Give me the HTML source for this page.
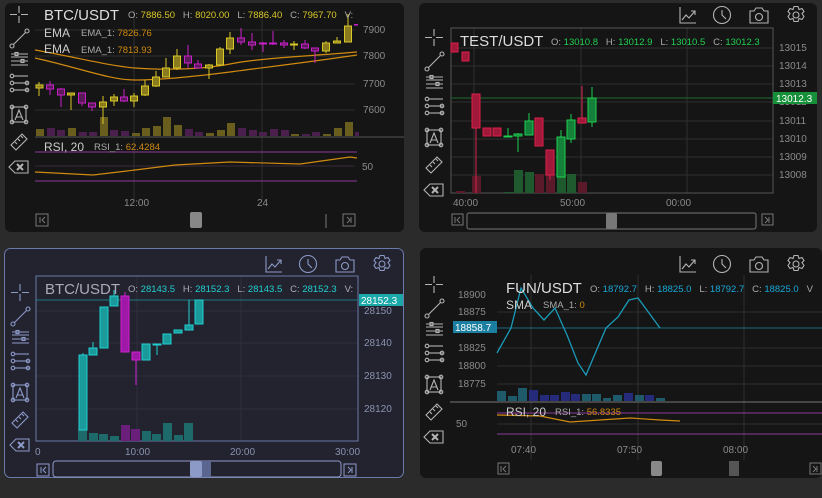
<!DOCTYPE html>
<html><head><meta charset="utf-8"><style>
html,body{margin:0;padding:0;background:#2b2b2b;width:822px;height:498px;overflow:hidden}
svg{display:block;font-family:"Liberation Sans",sans-serif}
text{white-space:pre}
.ic{fill:none;stroke:#b4b4b4;stroke-width:1.1}
.icb{fill:none;stroke:#8c9ac8;stroke-width:1.1}
.g{stroke:#2e2e2e;stroke-width:1}
.lab{fill:#8a8a8a;font-size:10px}
.yc rect{fill:#8a7c1e;stroke:#d8c828}
.yc line,.yw{stroke:#d8c828}
.mc rect{fill:#5a1a5a;stroke:#c820c8}
.mw{stroke:#c820c8}
</style></head><body>
<svg width="822" height="498" viewBox="0 0 822 498" xmlns="http://www.w3.org/2000/svg">
<defs>
<g id="tools">
 <path d="M19 6v7M19 16v7M10 14.5h7M21 14.5h7" />
 <circle cx="12" cy="46" r="2"/><circle cx="27" cy="31" r="2"/><path d="M13.5 44.5l12-12"/>
 <path d="M11 54h17M11 57h17M11 61h17M11 65h17"/><rect x="15" y="52.5" width="3" height="3"/><rect x="21" y="59.5" width="3" height="3"/>
 <circle cx="12" cy="76" r="1.8"/><path d="M14 76h14"/><circle cx="12" cy="83" r="1.8"/><path d="M14 83h14"/><circle cx="12" cy="90" r="1.8"/><path d="M14 90h14"/><circle cx="27" cy="83" r="1.8"/><circle cx="27" cy="90" r="1.8"/>
 <rect x="12" y="107" width="14" height="15"/><circle cx="12" cy="107" r="1.8"/><circle cx="26" cy="107" r="1.8"/><circle cx="12" cy="122" r="1.8"/><circle cx="26" cy="122" r="1.8"/>
 <path d="M15 120l4-10l4 10M16.5 117h5" />
 <path d="M11 145l11-11l5 5l-11 11z"/><path d="M15 142l2 2M18 139l2 2M21 136l2 2"/>
 <path d="M9 167l6-6h13v12h-13z"/><path d="M17 164l6 6M23 164l-6 6" stroke-width="2"/>
</g>
<g id="top">
 <path d="M0 0v16h16M2 13l4-5l3 3l6-7M11 4h4v4"/>
 <circle cx="42" cy="8" r="8.5"/><path d="M42 3v5l4 4"/>
 <path d="M70 4h4l2-3h6l2 3h4v12h-18z"/><circle cx="79" cy="10" r="3.5"/>
 <circle cx="116" cy="8" r="3"/><path d="M114 -1h4l1 3l3 -1l2 3l-2 2l2 3l-2 3l-3-1l-1 3h-4l-1-3l-3 1l-2-3l2-3l-2-2l2-3l3 1z" transform="translate(0,0.5)"/>
</g>
</defs>

<!-- ============ TL panel ============ -->
<rect x="5" y="3" width="399" height="229" rx="6" fill="#151515"/>
<use href="#tools" class="ic"/>
<g class="g">
<path d="M35 30h320M35 56h320M35 84h320M35 110h320M134 10v190M262 10v190"/>
<path d="M35 166h320" stroke="#3a2a3a"/>
</g>
<path d="M35 137h369" stroke="#555" stroke-width="1"/>
<path d="M35 152h322M35 181h322" stroke="#8a3a9a" stroke-width="1"/>
<g fill="#6a5e1e">
<rect x="36" y="129" width="8" height="7"/><rect x="68" y="128" width="8" height="8"/><rect x="100" y="117" width="8" height="19"/><rect x="132" y="133" width="8" height="3"/><rect x="142" y="128" width="8" height="8"/><rect x="153" y="126" width="8" height="10"/><rect x="163" y="117" width="8" height="19"/><rect x="174" y="125" width="8" height="11"/><rect x="206" y="133" width="8" height="3"/><rect x="217" y="130" width="8" height="6"/><rect x="227" y="123" width="8" height="13"/><rect x="291" y="134" width="8" height="2"/><rect x="323" y="134" width="8" height="2"/><rect x="334" y="128" width="8" height="8"/><rect x="345" y="122" width="8" height="14"/>
</g>
<g fill="#4a1f4e">
<rect x="47" y="128" width="8" height="8"/><rect x="57" y="130" width="8" height="6"/><rect x="79" y="132" width="8" height="4"/><rect x="89" y="132" width="8" height="4"/><rect x="110" y="130" width="8" height="6"/><rect x="121" y="131" width="8" height="5"/><rect x="185" y="129" width="8" height="7"/><rect x="195" y="132" width="8" height="4"/><rect x="238" y="128" width="8" height="8"/><rect x="249" y="130" width="8" height="6"/><rect x="259" y="132" width="8" height="4"/><rect x="270" y="129" width="8" height="7"/><rect x="281" y="130" width="8" height="6"/><rect x="302" y="134" width="8" height="2"/><rect x="312" y="132" width="8" height="4"/><rect x="355" y="132" width="4" height="4"/>
</g>
<path d="M35 50C80 58 110 66 135 68S200 70 230 64S310 56 357 52" fill="none" stroke="#d08a10" stroke-width="1.2"/>
<path d="M35 58C80 68 110 80 135 80S200 76 230 72S310 62 357 55" fill="none" stroke="#d08a10" stroke-width="1.2"/>
<g stroke-width="1">
<g class="yc"><line x1="39" y1="82" x2="39" y2="96"/><rect x="36" y="85" width="7" height="3"/></g>
<g class="mc"><line class="mw" x1="50" y1="81" x2="50" y2="95"/><rect x="46.5" y="85" width="7" height="4"/></g>
<g class="mc"><line class="mw" x1="61" y1="88" x2="61" y2="107"/><rect x="57.5" y="89" width="7" height="6"/></g>
<g class="yc"><line x1="71" y1="93" x2="71" y2="110"/><rect x="67.5" y="93" width="7" height="2"/></g>
<g class="mc"><line class="mw" x1="82" y1="93" x2="82" y2="106"/><rect x="78.5" y="93" width="7" height="10"/></g>
<g class="mc"><line class="mw" x1="92" y1="103" x2="92" y2="111"/><rect x="88.5" y="103" width="7" height="4"/></g>
<g class="yc"><line x1="103" y1="96" x2="103" y2="124"/><rect x="99.5" y="102" width="7" height="5"/></g>
<g class="yc"><line x1="114" y1="94" x2="114" y2="106"/><rect x="110.5" y="97" width="7" height="4"/></g>
<g class="mc"><line class="mw" x1="124" y1="89" x2="124" y2="102"/><rect x="120.5" y="97" width="7" height="4"/></g>
<g class="yc"><line x1="134" y1="93" x2="134" y2="107"/><rect x="130.5" y="96" width="7" height="5"/></g>
<g class="yc"><line x1="145" y1="80" x2="145" y2="96"/><rect x="141.5" y="86" width="7" height="9"/></g>
<g class="yc"><line x1="156" y1="71" x2="156" y2="87"/><rect x="152.5" y="77" width="7" height="9"/></g>
<g class="yc"><line x1="166" y1="58" x2="166" y2="77"/><rect x="162.5" y="68" width="7" height="9"/></g>
<g class="yc"><line x1="177" y1="49" x2="177" y2="70"/><rect x="173.5" y="56" width="7" height="12"/></g>
<g class="mc"><line class="mw" x1="188" y1="45" x2="188" y2="68"/><rect x="184.5" y="56" width="7" height="7"/></g>
<g class="mc"><line class="mw" x1="198" y1="60" x2="198" y2="68"/><rect x="194.5" y="64" width="7" height="4"/></g>
<g class="yc"><line x1="209" y1="64" x2="209" y2="79"/><rect x="205.5" y="65" width="7" height="3"/></g>
<g class="yc"><line x1="220" y1="47" x2="220" y2="66"/><rect x="216.5" y="49" width="7" height="16"/></g>
<g class="yc"><line x1="230" y1="32" x2="230" y2="54"/><rect x="226.5" y="38" width="7" height="11"/></g>
<g class="mc"><line class="mw" x1="241" y1="28" x2="241" y2="45"/><rect x="237.5" y="38" width="7" height="4"/></g>
<g class="mc"><line class="mw" x1="252" y1="33" x2="252" y2="50"/><rect x="248.5" y="42" width="7" height="3"/></g>
<g class="mc"><line class="mw" x1="263" y1="42" x2="263" y2="52"/><rect x="259.5" y="43" width="7" height="1"/></g>
<g class="mc"><line class="mw" x1="273" y1="31" x2="273" y2="45"/><rect x="269.5" y="43" width="7" height="1"/></g>
<g class="mc"><line class="mw" x1="284" y1="40" x2="284" y2="48"/><rect x="280.5" y="43" width="7" height="2"/></g>
<g class="yc"><line x1="294" y1="41" x2="294" y2="50"/><rect x="290.5" y="44" width="7" height="1"/></g>
<g class="mc"><line class="mw" x1="305" y1="40" x2="305" y2="49"/><rect x="301.5" y="44" width="7" height="4"/></g>
<g class="mc"><line class="mw" x1="315" y1="48" x2="315" y2="63"/><rect x="311.5" y="48" width="7" height="3"/></g>
<g class="yc"><line x1="326" y1="41" x2="326" y2="53"/><rect x="322.5" y="43" width="7" height="8"/></g>
<g class="yc"><line x1="337" y1="37" x2="337" y2="43"/><rect x="333.5" y="41" width="7" height="2"/></g>
<g class="yc"><line x1="348" y1="14" x2="348" y2="42"/><rect x="344.5" y="26" width="7" height="16"/></g>
<rect x="354" y="24" width="4" height="1.5" fill="#c820c8"/>
</g>
<path d="M35 172L93 175L135 170L175 165L230 162L300 164L350 157L357 158" fill="none" stroke="#d08a10" stroke-width="1.2"/>
<text x="44" y="20" fill="#ddd" font-size="15">BTC/USDT</text>
<g font-size="9.5"><text x="128" y="18" fill="#aaa">O: <tspan fill="#d8c828">7886.50</tspan>   H: <tspan fill="#d8c828">8020.00</tspan>   L: <tspan fill="#d8c828">7886.40</tspan>   C: <tspan fill="#d8c828">7967.70</tspan>   V:</text>
<text x="81" y="36" fill="#aaa">EMA_1: <tspan fill="#d08a10">7826.76</tspan></text>
<text x="81" y="53" fill="#aaa">EMA_1: <tspan fill="#d08a10">7813.93</tspan></text>
<text x="94" y="150" fill="#aaa">RSI_1: <tspan fill="#d08a10">62.4284</tspan></text></g>
<text x="44" y="37" fill="#ccc" font-size="12">EMA</text>
<text x="44" y="53" fill="#ccc" font-size="12">EMA</text>
<text x="44" y="151" fill="#ccc" font-size="12">RSI, 20</text>
<g class="lab"><text x="363" y="33">7900</text><text x="363" y="59">7800</text><text x="363" y="87">7700</text><text x="363" y="113">7600</text><text x="362" y="170">50</text><text x="124" y="206">12:00</text><text x="257" y="206">24</text></g>
<g fill="none" stroke="#777"><rect x="36" y="214" width="12" height="12"/><path d="M40 217v6M45 217l-3 3l3 3"/><rect x="343" y="214" width="12" height="12"/><path d="M351 217v6M347 217l3 3l-3 3"/><path d="M326 214v14"/></g>
<rect x="190" y="212" width="12" height="16" rx="2" fill="#888"/>

<!-- ============ TR panel ============ -->
<rect x="419" y="3" width="398" height="229" rx="6" fill="#151515"/>
<use href="#tools" x="415" y="23" class="ic"/>
<use href="#top" x="680" y="7" class="ic"/>
<g class="g"><path d="M451 48h322M451 66h322M451 84h322M451 102h322M451 121h322M451 139h322M451 157h322M451 175h322M474 28v165M581 28v165M687 28v165"/></g>
<rect x="451" y="28" width="322" height="165" fill="none" stroke="#555"/>
<path d="M451 98h322" stroke="#1e6a2e"/>
<g fill="#5a1a2a"><rect x="472" y="176" width="9" height="17"/><rect x="535" y="174" width="9" height="19"/><rect x="546" y="174" width="9" height="19"/><rect x="578" y="182" width="9" height="11"/><rect x="456" y="191" width="9" height="2"/></g>
<g fill="#1e5a2e"><rect x="514" y="170" width="9" height="23"/><rect x="525" y="172" width="9" height="21"/><rect x="557" y="174" width="9" height="19"/><rect x="567" y="174" width="9" height="19"/><rect x="504" y="192" width="9" height="1"/></g>
<g stroke-width="1">
<g stroke="#e0204a" fill="#a0183a">
<rect x="451" y="43" width="7" height="9"/><rect x="462" y="52" width="7" height="9"/>
<line x1="476" y1="94" x2="476" y2="193"/><rect x="472" y="94" width="8" height="34"/>
<rect x="483" y="128" width="8" height="8"/><rect x="493" y="128" width="8" height="8"/>
<rect x="535" y="118" width="8" height="28"/>
<line x1="550" y1="150" x2="550" y2="180"/><rect x="546" y="150" width="8" height="25"/>
<line x1="582" y1="86" x2="582" y2="118"/><rect x="578" y="118" width="8" height="5"/>
</g>
<g stroke="#20d050" fill="#15803a">
<line x1="508" y1="128" x2="508" y2="137"/><rect x="504" y="136" width="8" height="1"/>
<line x1="518" y1="133" x2="518" y2="152"/><rect x="514" y="134" width="8" height="2"/>
<line x1="529" y1="113" x2="529" y2="121"/><rect x="525" y="121" width="8" height="14"/>
<line x1="561" y1="130" x2="561" y2="177"/><rect x="557" y="137" width="8" height="40"/>
<line x1="571" y1="114" x2="571" y2="143"/><rect x="567" y="120" width="8" height="19"/>
<line x1="592" y1="87" x2="592" y2="127"/><rect x="588" y="98" width="8" height="24"/>
</g></g>
<text x="460" y="46" fill="#ddd" font-size="15">TEST/USDT</text>
<text x="551" y="45" fill="#aaa" font-size="9.5">O: <tspan fill="#20d050">13010.8</tspan>   H: <tspan fill="#20d050">13012.9</tspan>   L: <tspan fill="#20d050">13010.5</tspan>   C: <tspan fill="#20d050">13012.3</tspan></text>
<g class="lab"><text x="779" y="51">13015</text><text x="779" y="69">13014</text><text x="779" y="87">13013</text><text x="779" y="105">13012</text><text x="779" y="124">13011</text><text x="779" y="142">13010</text><text x="779" y="160">13009</text><text x="779" y="178">13008</text>
<text x="453" y="206">40:00</text><text x="560" y="206">50:00</text><text x="666" y="206">00:00</text></g>
<rect x="773" y="92" width="44" height="12" fill="#17903a"/><text x="776" y="102" fill="#fff" font-size="10">13012.3</text>
<g fill="none" stroke="#777"><rect x="452" y="214" width="11" height="11"/><path d="M455 217v6M460 217l-3 3l3 3"/><rect x="762" y="214" width="11" height="11"/><path d="M769 217v6M765 217l3 3l-3 3"/><rect x="467" y="213" width="289" height="16" rx="2"/></g>
<rect x="606" y="213" width="11" height="16" rx="2" fill="#777"/>

<!-- ============ BL panel ============ -->
<rect x="4.5" y="248.5" width="399" height="229" rx="6" fill="#23232f" stroke="#6a7aaa"/>
<use href="#tools" x="1" y="278" class="icb"/>
<use href="#top" x="266" y="256" class="icb"/>
<g stroke="#2e2e3c"><path d="M36 311h322M36 343h322M36 376h322M36 409h322M137 276v165M241 276v165"/></g>
<rect x="36" y="276" width="322" height="165" fill="none" stroke="#6a7aaa"/>
<path d="M36 300h322" stroke="#1b7a80"/>
<g fill="#1e6a6a"><rect x="78" y="430" width="9" height="11"/><rect x="89" y="433" width="9" height="8"/><rect x="99" y="434" width="9" height="7"/><rect x="110" y="436" width="9" height="5"/><rect x="142" y="431" width="9" height="10"/><rect x="152" y="434" width="9" height="7"/><rect x="163" y="423" width="9" height="18"/><rect x="174" y="435" width="9" height="6"/><rect x="184" y="423" width="9" height="18"/></g>
<g fill="#6a1f7a"><rect x="121" y="425" width="9" height="16"/><rect x="131" y="429" width="9" height="12"/></g>
<g stroke="#20d0d0" fill="#1a9a9a">
<line x1="83" y1="353" x2="83" y2="430"/><rect x="79" y="355" width="8" height="75"/>
<line x1="93" y1="342" x2="93" y2="355"/><rect x="89" y="348" width="8" height="7"/>
<rect x="100" y="307" width="8" height="41"/>
<line x1="114" y1="290" x2="114" y2="306"/><rect x="110" y="296" width="8" height="10"/>
<rect x="142" y="344" width="8" height="16"/>
<line x1="157" y1="344" x2="157" y2="355"/><rect x="153" y="344" width="8" height="1"/>
<rect x="163" y="334" width="8" height="10"/>
<rect x="174" y="330" width="8" height="3"/>
<line x1="189" y1="300" x2="189" y2="330"/><rect x="185" y="325" width="8" height="5"/>
<rect x="195" y="300" width="8" height="24"/>
</g>
<g stroke="#d020d0" fill="#a018a8">
<line x1="125" y1="292" x2="125" y2="352"/><rect x="121" y="296" width="8" height="56"/>
<line x1="136" y1="352" x2="136" y2="385"/><rect x="132" y="352" width="8" height="8"/>
</g>
<text x="45" y="294" fill="#aab" font-size="15">BTC/USDT</text>
<text x="128" y="292" fill="#aab" font-size="9.5">O: <tspan fill="#20d0d0">28143.5</tspan>   H: <tspan fill="#20d0d0">28152.3</tspan>   L: <tspan fill="#20d0d0">28143.5</tspan>   C: <tspan fill="#20d0d0">28152.3</tspan>   V:</text>
<g fill="#8a92b0" font-size="10"><text x="364" y="314">28150</text><text x="364" y="346">28140</text><text x="364" y="379">28130</text><text x="364" y="412">28120</text><text x="35" y="455">0</text><text x="125" y="455">10:00</text><text x="230" y="455">20:00</text><text x="335" y="455">30:00</text></g>
<rect x="359" y="294" width="44" height="12" fill="#1ba8a8"/><text x="361" y="304" fill="#fff" font-size="10">28152.3</text>
<g fill="none" stroke="#8c9ac8"><rect x="37" y="464" width="12" height="12"/><path d="M41 467v6M46 467l-3 3l3 3"/><rect x="344" y="464" width="12" height="12"/><path d="M352 467v6M348 467l3 3l-3 3"/><rect x="53" y="461" width="288" height="16" rx="3"/></g>
<rect x="190" y="461" width="21" height="16" fill="#5a6590"/><rect x="190" y="461" width="12" height="16" rx="2" fill="#8c9ac8"/>

<!-- ============ BR panel ============ -->
<rect x="420" y="248" width="402" height="230" rx="6" fill="#151515"/>
<use href="#tools" x="415" y="270" class="ic"/>
<use href="#top" x="680" y="256" class="ic"/>
<g class="g"><path d="M497 312h325M497 348h325M497 366h325M497 384h325M531 275v185M638 275v185M744 275v185M497 424h325"/></g>
<path d="M497 328h325" stroke="#1a6a80"/>
<path d="M450 402h372" stroke="#777"/>
<path d="M497 413h325M497 434h325" stroke="#8a3a9a"/>
<g fill="#1e5a6a"><rect x="497" y="391" width="9" height="10"/><rect x="508" y="396" width="9" height="5"/><rect x="518" y="388" width="9" height="13"/><rect x="582" y="394" width="9" height="7"/><rect x="592" y="394" width="9" height="7"/><rect x="603" y="398" width="8" height="3"/><rect x="613" y="395" width="9" height="6"/><rect x="635" y="395" width="9" height="6"/><rect x="656" y="398" width="9" height="3"/></g>
<g fill="#252a7a"><rect x="529" y="390" width="9" height="11"/><rect x="540" y="395" width="9" height="6"/><rect x="550" y="395" width="9" height="6"/><rect x="561" y="392" width="9" height="9"/><rect x="571" y="394" width="9" height="7"/><rect x="624" y="393" width="9" height="8"/><rect x="645" y="395" width="9" height="6"/></g>
<polyline points="497,353 511,328 521,288 533,308 544,320 555,308 567,335 578,363 586,375 606,328 618,317 629,300 638,298 660,328" fill="none" stroke="#1a9ab8" stroke-width="1.3"/>
<path d="M497 415L540 416L570 422L600 420L630 418L660 420L680 421" fill="none" stroke="#d08a10" stroke-width="1.2"/>
<text x="506" y="293" fill="#ddd" font-size="15">FUN/USDT</text>
<text x="590" y="292" fill="#aaa" font-size="9.5">O: <tspan fill="#1aa8d8">18792.7</tspan>   H: <tspan fill="#1aa8d8">18825.0</tspan>   L: <tspan fill="#1aa8d8">18792.7</tspan>   C: <tspan fill="#1aa8d8">18825.0</tspan>   V</text>
<text x="506" y="309" fill="#ccc" font-size="12">SMA</text>
<text x="543" y="308" fill="#aaa" font-size="9.5">SMA_1: <tspan fill="#d08a10">0</tspan></text>
<text x="506" y="416" fill="#ccc" font-size="12">RSI, 20</text>
<text x="555" y="415" fill="#aaa" font-size="9.5">RSI_1: <tspan fill="#d08a10">56.8335</tspan></text>
<g class="lab"><text x="458" y="298">18900</text><text x="458" y="315">18875</text><text x="458" y="351">18825</text><text x="458" y="369">18800</text><text x="458" y="387">18775</text><text x="456" y="427">50</text><text x="511" y="453">07:40</text><text x="617" y="453">07:50</text><text x="723" y="453">08:00</text></g>
<rect x="453" y="321" width="44" height="12" fill="#1a7fa0"/><text x="455" y="331" fill="#fff" font-size="10">18858.7</text>
<g fill="none" stroke="#777"><rect x="498" y="463" width="11" height="11"/><path d="M501 466v6M506 466l-3 3l3 3"/><rect x="810" y="463" width="11" height="11"/><path d="M817 466v6M813 466l3 3l-3 3"/></g>
<rect x="651" y="461" width="11" height="15" rx="2" fill="#888"/><rect x="729" y="461" width="10" height="15" fill="#555"/>
</svg>
</body></html>
